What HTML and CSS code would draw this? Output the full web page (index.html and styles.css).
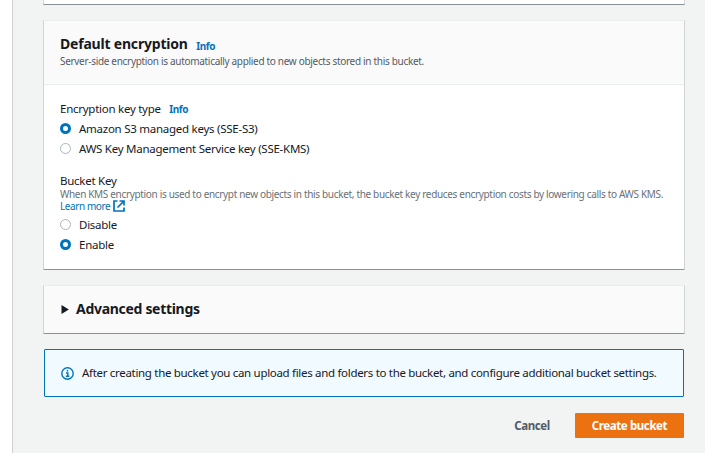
FILE: index.html
```html
<!DOCTYPE html>
<html lang="en">
<head>
<meta charset="utf-8">
<title>Create bucket</title>
<link rel="stylesheet" href="styles.css">
</head>
<body>
<main class="content">
  <section class="card card-previous"></section>
  <section class="card card-encryption">
    <header class="card-header">
      <div class="title-row"><h2 class="title">Default encryption</h2><a class="info">Info</a></div>
      <p class="description">Server-side encryption is automatically applied to new objects stored in this bucket.</p>
    </header>
    <div class="card-body">
      <div class="label-row"><span>Encryption key type</span><a class="info">Info</a></div>
      <div class="option"><i class="radio checked"></i><span>Amazon S3 managed keys (SSE-S3)</span></div>
      <div class="option"><i class="radio"></i><span>AWS Key Management Service key (SSE-KMS)</span></div>
      <div class="label-row label-row-key"><span>Bucket Key</span></div>
      <p class="hint">When KMS encryption is used to encrypt new objects in this bucket, the bucket key reduces encryption costs by lowering calls to AWS KMS.</p>
      <a class="learn"><span>Learn more</span><svg class="external" viewBox="0 0 12 12" width="12" height="12"><path d="M4.5 1H1v10h10V7.5M6.5 1H11v4.5M11 1 4.5 7.5"/></svg></a>
      <div class="option"><i class="radio"></i><span>Disable</span></div>
      <div class="option"><i class="radio checked"></i><span>Enable</span></div>
    </div>
  </section>
  <section class="card card-advanced">
    <svg class="caret" viewBox="0 0 8 9" width="8" height="9"><path d="M.5 0 7.8 4.5 .5 9z"/></svg>
    <h2 class="title title-advanced">Advanced settings</h2>
  </section>
  <div class="alert">
    <svg class="info-icon" viewBox="0 0 13 13" width="13" height="13"><circle cx="6.5" cy="6.5" r="5.7"/><path d="M6.5 3v1.5M5 6h1.8v3.3M4.8 9.3h3.5"/></svg>
    <span>After creating the bucket you can upload files and folders to the bucket, and configure additional bucket settings.</span>
  </div>
  <div class="actions">
    <button class="button button-cancel">Cancel</button>
    <button class="button button-primary">Create bucket</button>
  </div>
</main>
</body>
</html>
```
FILE: styles.css
```css
* { box-sizing: border-box; }
body {
  margin: 0;
  background: #fff;
  color: #16191f;
  font: 11.5px/20px "Noto Sans", sans-serif;
  letter-spacing: -.26px;
  white-space: nowrap;
}
h2, p { margin: 0; }
.content {
  height: 453px;
  margin-left: 12px;
  padding: 0 20px 0 30px;
  border-left: 1px solid #ccd1d1;
  background: #f2f3f3;
  overflow: hidden;
}
.card {
  margin-bottom: 15px;
  border: 1px solid #d0d4d4;
  border-top-color: #eaeded;
  border-bottom-color: #879196;
  border-radius: 1px;
  background: #fff;
}
.card-previous { height: 5px; border-top: 0; }
.card-encryption { height: 250px; }
.card-header {
  height: 64px;
  padding: 13px 16px 0;
  border-bottom: 1px solid #eaeded;
  background: #fafafa;
}
.title-row, .label-row, .option, .learn { display: flex; align-items: center; }
.title-row { height: 20px; }
.title { font-size: 14px; line-height: 20px; font-weight: 700; letter-spacing: -.2px; }
.title-advanced { margin-top: -2px; letter-spacing: -.3px; }
.info { margin-left: 8.5px; color: #0073bb; font-size: 10px; font-weight: 700; letter-spacing: -.4px; }
.title-row .info { padding-top: 3px; }
.description { font-size: 10px; line-height: 14px; letter-spacing: -.31px; color: #545b64; }
.card-body { padding: 14px 16px 0; }
.label-row { height: 20px; }
.label-row-key { height: 18px; margin-top: 13px; }
.option { height: 20px; }
.radio {
  width: 11px;
  height: 11px;
  margin: 0 8px 1px 0;
  border: 1px solid #aab7b8;
  border-radius: 50%;
  background: #fff;
}
.radio.checked { border: 3.5px solid #0073bb; }
.hint { margin-top: -2px; height: 12px; font-size: 10px; line-height: 12px; letter-spacing: -.33px; color: #687078; }
.learn { height: 12px; margin-bottom: 3px; font-size: 10px; letter-spacing: -.42px; color: #0073bb; }
.external { margin-left: 3px; fill: none; stroke: #0073bb; stroke-width: 1.7; }
.card-advanced {
  display: flex;
  align-items: center;
  height: 49px;
  padding-left: 17px;
  background: #fafafa;
}
.caret { margin: 0 7px 1px 0; fill: #16191f; }
.alert {
  display: flex;
  align-items: center;
  width: 640px;
  height: 48px;
  margin-left: 1px;
  padding-left: 16px;
  border: 1px solid #0073bb;
  border-radius: 1px;
  background: #f1faff;
  letter-spacing: -.31px;
}
.info-icon { flex: none; margin-right: 8px; fill: none; stroke: #0073bb; stroke-width: 1.4; }
.actions { display: flex; justify-content: flex-end; margin: 16px 1px 0 0; }
.button {
  height: 25px;
  padding: 0;
  border: 0;
  border-radius: 1px;
  background: none;
  color: #545b64;
  font: 700 11.5px/25px "Noto Sans", sans-serif;
  letter-spacing: -.4px;
}
.button-cancel { width: 70px; margin-right: 8px; }
.button-primary { width: 109px; background: #ec7211; color: #fff; }
```
